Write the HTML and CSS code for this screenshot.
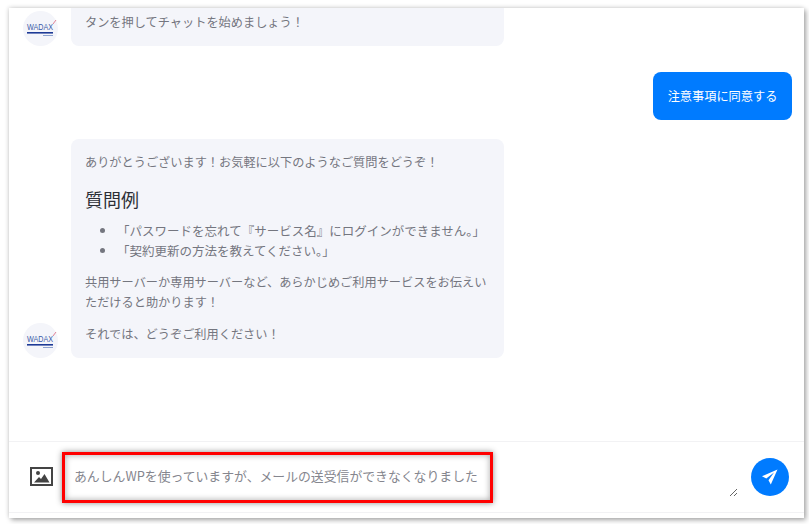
FILE: index.html
```html
<!DOCTYPE html>
<html lang="ja">
<head>
<meta charset="utf-8">
<title>チャット</title>
<link rel="stylesheet" href="styles.css">
</head>
<body>
<main class="panel">
  <section class="messages">
    <div class="row">
      <svg class="avatar" viewBox="0 0 35 35" aria-hidden="true">
        <circle cx="17.500" cy="17.500" r="17.500" fill="#f4f5fa"/>
        <text x="4" y="19.400" font-family="Liberation Sans" font-size="9" fill="#3a5aa8" textLength="26" lengthAdjust="spacingAndGlyphs">WADAX</text>
        <path d="M4 21h26v1.600H4z" fill="#1d3a96"/>
        <path d="M30 13l3-4" stroke="#d9506a" stroke-width=".7" fill="none"/>
        <path d="M20 24h10v1H20z" fill="#8fa3cf"/>
      </svg>
      <div class="bubble"><p>タンを押してチャットを始めましょう！</p></div>
    </div>
    <div class="row row-user">
      <div class="bubble-user">注意事項に同意する</div>
    </div>
    <div class="row">
      <svg class="avatar" viewBox="0 0 35 35" aria-hidden="true">
        <circle cx="17.500" cy="17.500" r="17.500" fill="#f4f5fa"/>
        <text x="4" y="19.400" font-family="Liberation Sans" font-size="9" fill="#3a5aa8" textLength="26" lengthAdjust="spacingAndGlyphs">WADAX</text>
        <path d="M4 21h26v1.600H4z" fill="#1d3a96"/>
        <path d="M30 13l3-4" stroke="#d9506a" stroke-width=".7" fill="none"/>
        <path d="M20 24h10v1H20z" fill="#8fa3cf"/>
      </svg>
      <div class="bubble">
        <p>ありがとうございます！お気軽に以下のようなご質問をどうぞ！</p>
        <h3>質問例</h3>
        <ul>
          <li>「パスワードを忘れて『サービス名』にログインができません。」</li>
          <li>「契約更新の方法を教えてください。」</li>
        </ul>
        <p>共用サーバーか専用サーバーなど、あらかじめご利用サービスをお伝えいただけると助かります！</p>
        <p>それでは、どうぞご利用ください！</p>
      </div>
    </div>
  </section>
  <form class="composer">
    <svg class="image-icon" viewBox="0 0 23 19" aria-hidden="true">
      <path fill-rule="evenodd" d="M0 0h23v19H0zM2 2v15h19V2z" fill="#444"/>
      <circle cx="8" cy="6" r="2" fill="#444"/>
      <path d="M4 15.500 9 10l2 2 3.500-5 5 8.500z" fill="#444"/>
    </svg>
    <div class="field">
      <textarea class="input" rows="2">あんしんWPを使っていますが、メールの送受信ができなくなりました</textarea>
      <div class="highlight"></div>
    </div>
    <button class="send" type="button" aria-label="送信">
      <svg viewBox="0 0 16 16" aria-hidden="true"><path d="M15.500.5 0 7.200l4.300 2.300L12 3.600 6.500 11.200l2.300 4.300z" fill="#fff"/></svg>
    </button>
  </form>
</main>
</body>
</html>
```
FILE: styles.css
```css
* { box-sizing: border-box; }
html, body { height: 100%; }
body {
  margin: 0;
  padding: 8px 5px 6px 9px;
  background: #fff;
  font-family: "Noto Sans CJK JP", "Noto Sans", sans-serif;
  font-size: 12.2px;
  color: #74767f;
  overflow: hidden;
}
.panel {
  height: 510px;
  display: flex;
  flex-direction: column;
  background: #fff;
  box-shadow: 2px 2px 5px rgba(0, 0, 0, .35), -1px -1px 4px rgba(0, 0, 0, .1);
}
.messages {
  flex: 1;
  min-height: 0;
  overflow: hidden;
  display: flex;
  flex-direction: column;
  justify-content: flex-end;
  gap: 19px;
  padding: 0 12px 83px 14px;
}
.row { display: flex; align-items: flex-end; gap: 13px; flex-shrink: 0; }
.row-user { justify-content: flex-end; margin-top: 7px; }
.avatar { width: 35px; height: 35px; flex-shrink: 0; }
.bubble {
  width: 433px;
  padding: 13px 14px 14px;
  background: #f4f5fa;
  border-radius: 8px;
  line-height: 20px;
}
.bubble p { margin: 0 0 12px; }
.bubble p:last-child { margin-bottom: 0; }
.bubble h3 {
  margin: 14px 0 9px;
  font-size: 18px;
  font-weight: 400;
  line-height: 26px;
  color: #2c2f36;
}
.bubble ul { margin: 0 0 11px; padding: 0 0 0 32px; font-size: 12.5px; }
.bubble-user {
  width: 139px;
  height: 48px;
  display: flex;
  align-items: center;
  justify-content: center;
  background: #007bff;
  color: #fff;
  border-radius: 8px;
}
.composer {
  height: 72px;
  flex-shrink: 0;
  margin-bottom: 5px;
  display: flex;
  align-items: flex-start;
  border-top: 1px solid #f2f2f4;
  border-bottom: 1px solid #f2f2f4;
}
.image-icon { width: 23px; height: 19px; margin: 25px 9px 0 21px; flex-shrink: 0; }
.field { position: relative; width: 677px; margin: 13px 0 0 0; }
.input {
  display: block;
  width: 676px;
  height: 42px;
  padding: 11px 12px 0;
  border: 0;
  outline: 0;
  background: transparent;
  font: inherit;
  font-size: 12.85px;
  line-height: 20px;
  color: #85868e;
  resize: both;
}
.highlight {
  position: absolute;
  left: 0;
  top: -3px;
  width: 431px;
  height: 51px;
  border: 3px solid #f00;
  box-shadow: 0 0 6px rgba(0, 0, 0, .45), inset 0 0 6px rgba(0, 0, 0, .35);
  pointer-events: none;
}
.send {
  width: 38px;
  height: 38px;
  margin: 16px 0 0 12px;
  padding: 0;
  flex-shrink: 0;
  display: flex;
  align-items: center;
  justify-content: center;
  border: 0;
  border-radius: 50%;
  background: #007bff;
}
.send svg { width: 16px; height: 16px; }
```
